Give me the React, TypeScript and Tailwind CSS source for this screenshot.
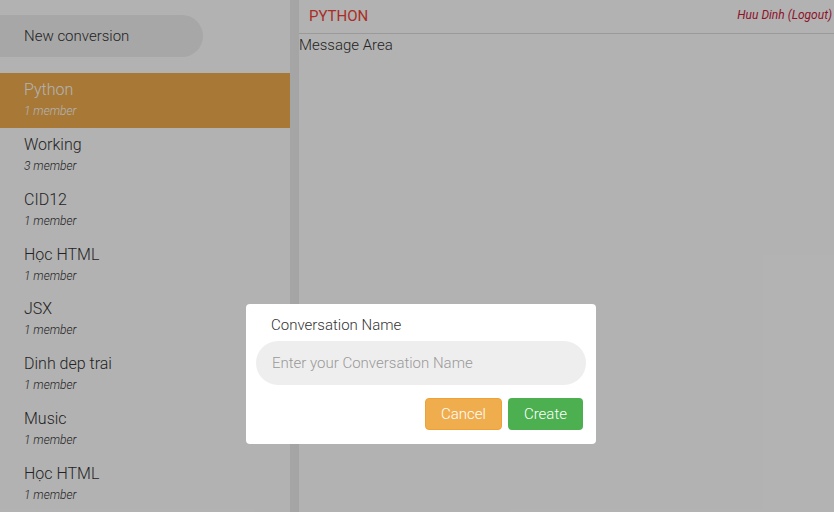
import React from "react";

interface Conversation {
  name: string;
  members: number;
}

const conversations: Conversation[] = [
  { name: "Python", members: 1 },
  { name: "Working", members: 3 },
  { name: "CID12", members: 1 },
  { name: "Học HTML", members: 1 },
  { name: "JSX", members: 1 },
  { name: "Dinh dep trai", members: 1 },
  { name: "Music", members: 1 },
  { name: "Học HTML", members: 1 },
];

const ConversationItem: React.FC<{ item: Conversation; active?: boolean }> = ({
  item,
  active,
}) => {
  return (
    <div
      className={`h-[55px] pl-6 pt-[6px] ${
        active ? "bg-[#f0ad4e] text-white" : "text-[#333]"
      }`}
    >
      <div className="text-base leading-[22px]">{item.name}</div>
      <div className="text-xs italic leading-[20px]">{item.members} member</div>
    </div>
  );
};

export default function App() {
  return (
    <div
      className="relative w-[834px] h-[512px] overflow-hidden bg-white flex font-light"
      style={{ fontFamily: "Roboto, 'Liberation Sans', sans-serif" }}
    >
      {/* Sidebar */}
      <div className="w-[290px] shrink-0 flex flex-col">
        <button className="mt-[15px] mb-4 h-[42px] w-[203px] rounded-r-full bg-[#efefef] text-left pl-6 text-[15px] font-light text-[#333]">
          New conversion
        </button>
        {conversations.map((c, i) => (
          <ConversationItem key={i} item={c} active={i === 0} />
        ))}
      </div>

      {/* Main */}
      <div className="flex-1 border-l-[9px] border-[#ececec] flex flex-col">
        <div className="h-[34px] border-b border-[#dddddd] flex items-center justify-between pl-[10px] pr-[2px]">
          <span className="text-[15px] font-normal text-[#f44336] uppercase">Python</span>
          <span className="text-xs italic font-normal text-[#cc1a3c] self-start mt-[7px]">
            Huu Dinh (Logout)
          </span>
        </div>
        <div className="text-[15px] text-[#333] leading-5 pt-[1px]">Message Area</div>
      </div>

      {/* Overlay */}
      <div className="absolute inset-0 bg-black/30" />

      {/* Modal */}
      <div className="absolute left-[246px] top-[304px] w-[350px] bg-white rounded-[4px] px-[10px] pt-[11px] pb-[14px]">
        <div className="pl-[15px] text-[15px] leading-5 text-[#333] mb-[6px]">
          Conversation Name
        </div>
        <input
          autoFocus
          className="w-full h-[44px] rounded-full bg-[#eeeeee] px-4 text-[15px] font-light outline-none caret-black placeholder:text-[#999]"
          placeholder="Enter your Conversation Name"
        />
        <div className="flex justify-end gap-[6px] mt-[13px] pr-[3px]">
          <button className="h-[32px] px-[15px] rounded-[4px] bg-[#f0ad4e] border border-[#eea236] text-white text-[15px] font-light">
            Cancel
          </button>
          <button className="h-[32px] px-4 rounded-[4px] bg-[#4caf50] text-white text-[15px] font-light">
            Create
          </button>
        </div>
      </div>
    </div>
  );
}
